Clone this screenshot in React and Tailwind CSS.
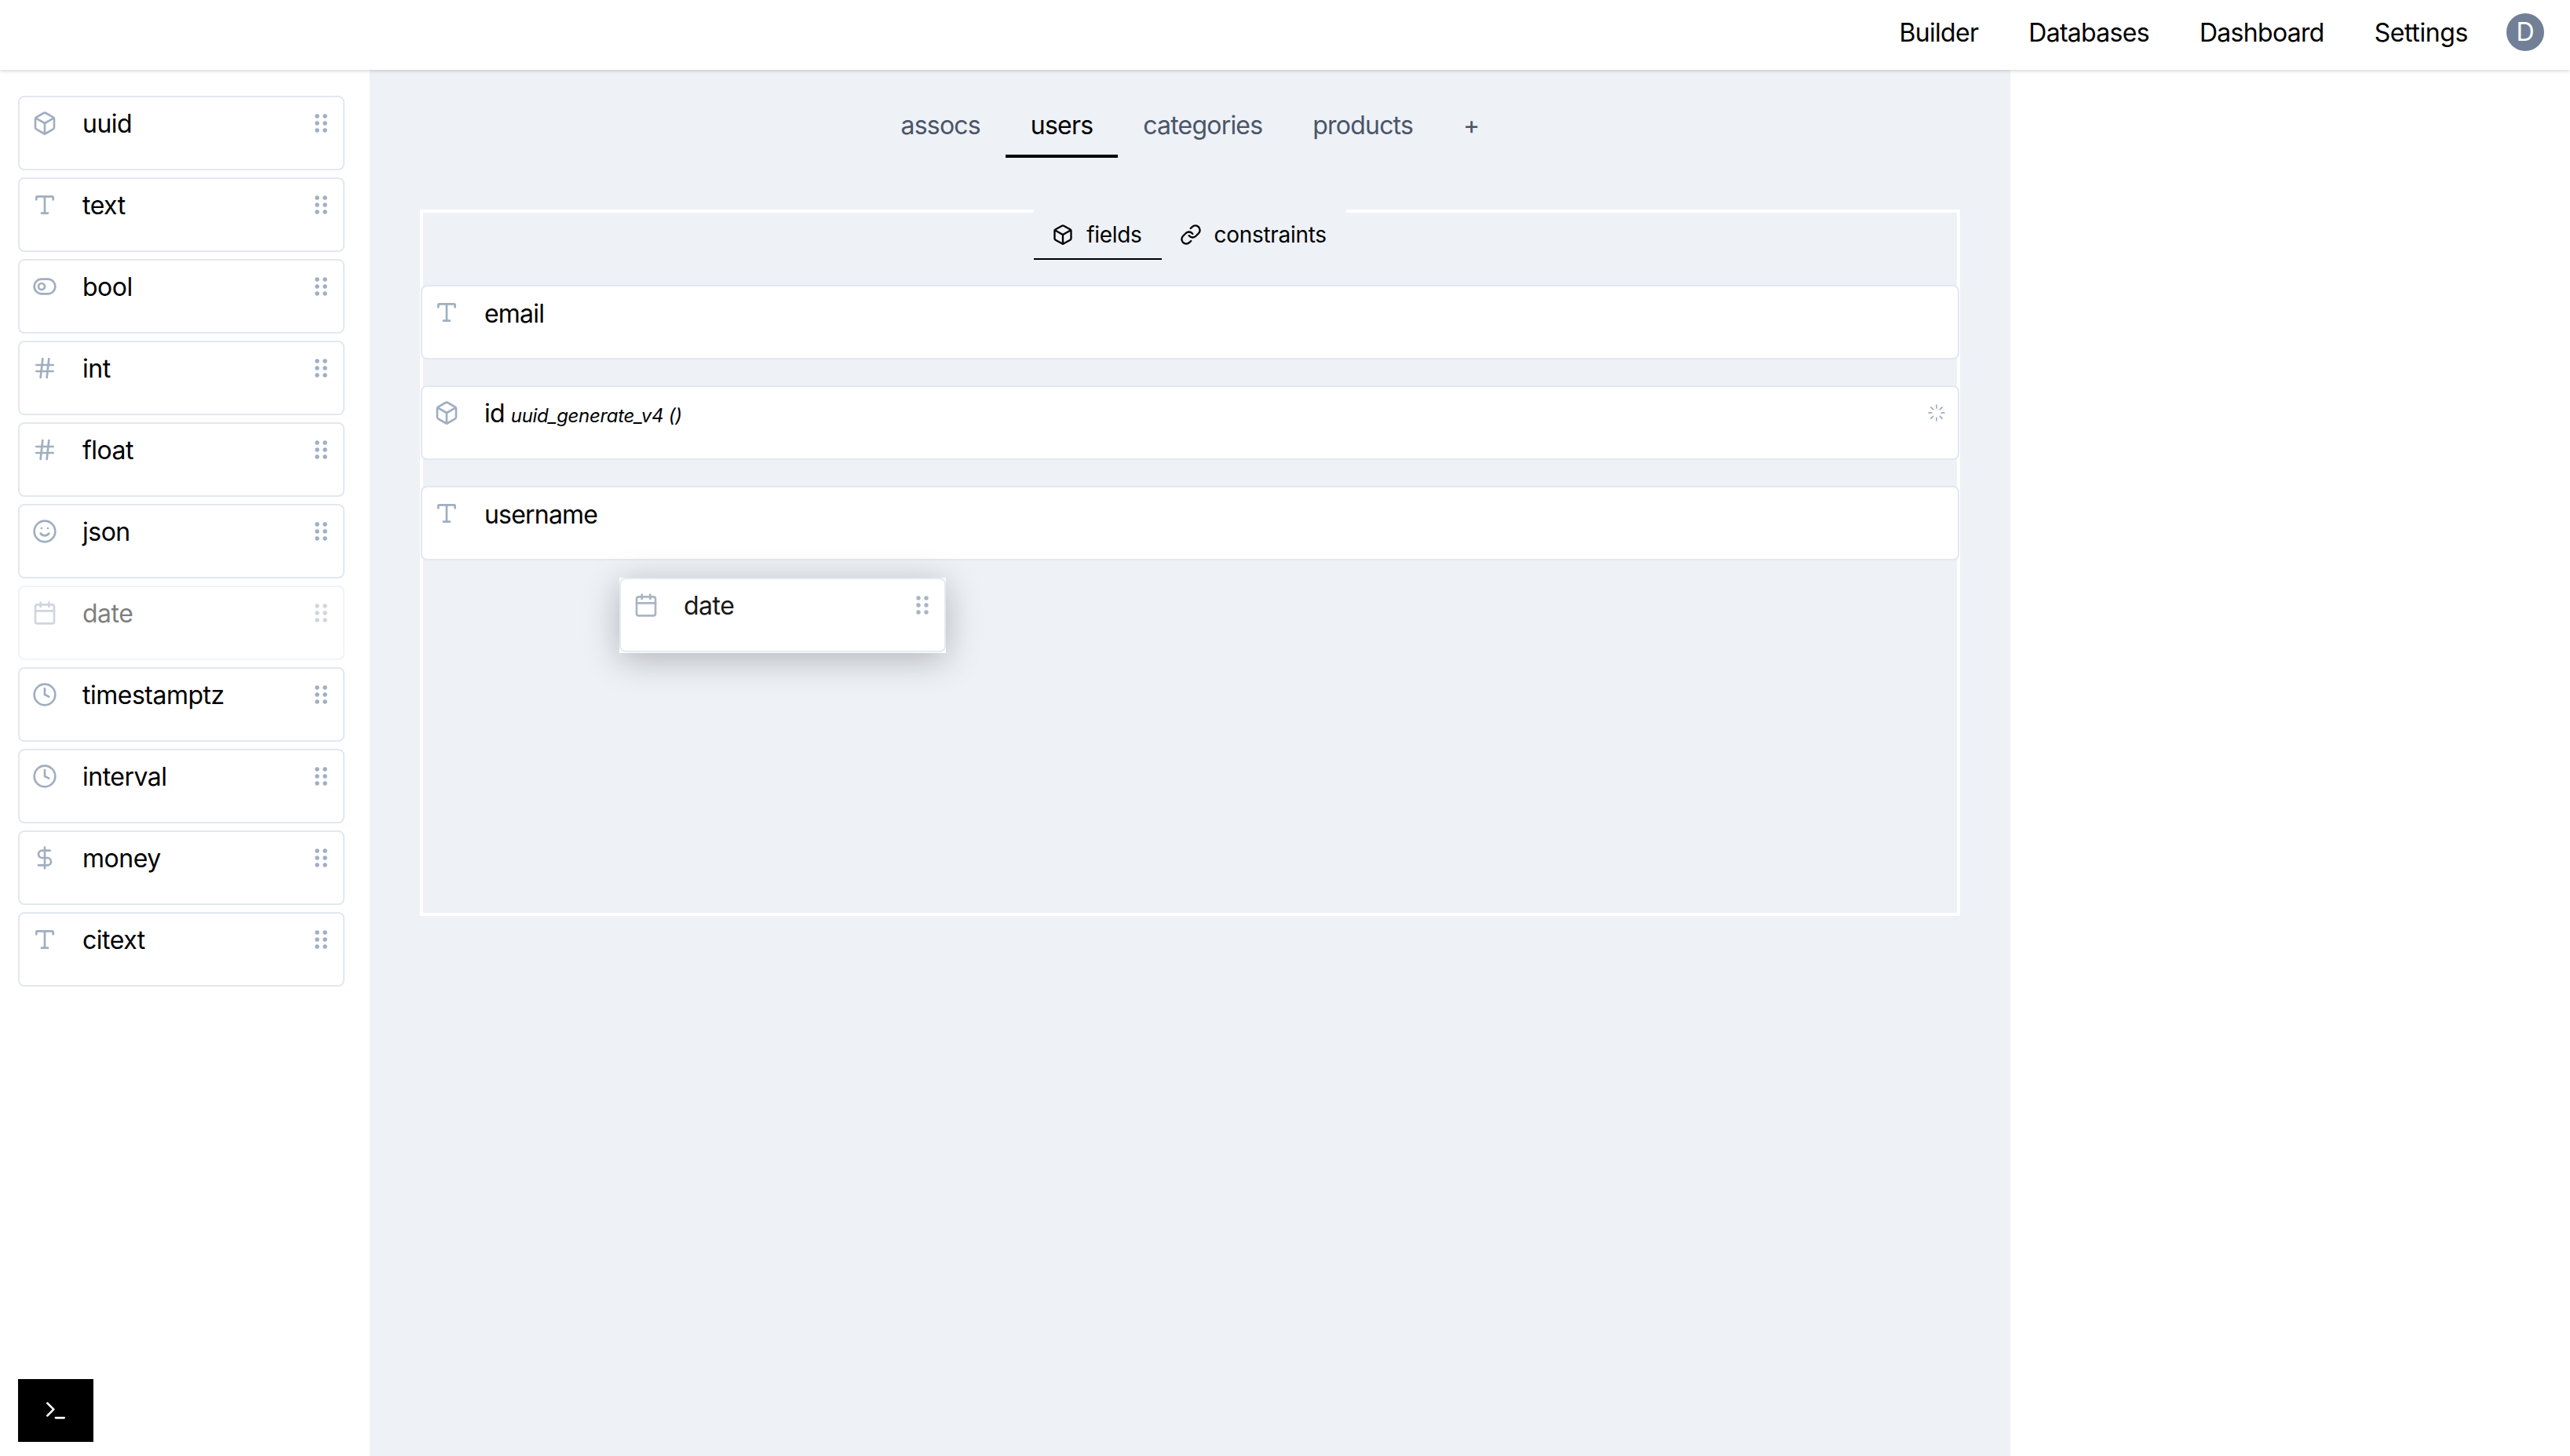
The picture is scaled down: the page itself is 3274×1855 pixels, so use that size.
import React from "react";
import { Box, Type, ToggleLeft, Hash, Smile, Calendar, Clock, DollarSign, Link, Loader, Terminal } from "lucide-react";

function Dots() {
  return (
    <svg width="16" height="24" viewBox="0 0 16 24" className="shrink-0 text-[#a0aec0]" fill="currentColor">
      <circle cx="3" cy="3" r="2.7" /><circle cx="13" cy="3" r="2.7" />
      <circle cx="3" cy="12" r="2.7" /><circle cx="13" cy="12" r="2.7" />
      <circle cx="3" cy="21" r="2.7" /><circle cx="13" cy="21" r="2.7" />
    </svg>
  );
}

function PaletteCard({ icon: Icon, label, className = "" }) {
  return (
    <div className={"h-[95px] w-[416px] rounded-lg border-2 border-[#e2e8f0] bg-white pl-4 pr-[20px] pt-[9px] " + className}>
      <div className="flex h-12 items-center">
        <Icon size={32} className="shrink-0 text-[#a0aec0]" />
        <span className="ml-8 flex-1 pt-0.5 text-[32px] leading-[48px] tracking-[-0.5px] text-black">{label}</span>
        <Dots />
      </div>
    </div>
  );
}

function FieldCard({ icon: Icon, label, extra, spinner }) {
  return (
    <div className="-mx-[3px] mb-[33px] h-[95px] rounded-lg border-2 border-[#e2e8f0] bg-white pl-[15px] pr-[17px] pt-[9px]">
      <div className="flex h-12 items-center">
        <Icon size={32} className="shrink-0 text-[#a0aec0]" />
        <div className="ml-8 flex-1 pt-1 text-[32px] leading-[48px] tracking-[-0.8px] text-black">
          {label}
          {extra && <span className="ml-2 text-[24px] italic tracking-[-0.3px]">{extra}</span>}
        </div>
        {spinner && <Loader size={24} strokeWidth={1.5} className="-mr-0.5 shrink-0 text-[#94a3b8]" />}
      </div>
    </div>
  );
}

const palette = [
  [Box, "uuid"], [Type, "text"], [ToggleLeft, "bool"], [Hash, "int"], [Hash, "float"], [Smile, "json"],
  [Calendar, "date"], [Clock, "timestamptz"], [Clock, "interval"], [DollarSign, "money"], [Type, "citext"],
];

export default function App() {
  return (
    <div className="flex h-[1855px] w-[3274px] flex-col overflow-hidden bg-white font-[Inter,sans-serif] text-black">
      <header className="relative z-10 flex h-[89px] shrink-0 items-center justify-end bg-white pr-[33px] shadow-[0_1px_5px_rgba(0,0,0,0.2)]">
        <nav className="flex items-center gap-16 pb-1.5 text-[32px] leading-[48px] tracking-[-0.7px]">
          <a>Builder</a>
          <a>Databases</a>
          <a>Dashboard</a>
          <a className="tracking-[-0.4px]">Settings</a>
        </nav>
        <div className="mb-2 ml-[49px] flex h-12 w-12 items-center justify-center rounded-full bg-[#718096] text-[32px] text-white">D</div>
      </header>

      <div className="flex min-h-0 flex-1">
        <aside className="flex w-[471px] shrink-0 flex-col justify-between bg-white pb-[18px] pl-[23px] pt-[33px]">
          <div className="flex flex-col gap-[9px]">
            {palette.map(([icon, label]) => (
              <PaletteCard key={label} icon={icon} label={label} className={label === "date" ? "opacity-50" : ""} />
            ))}
          </div>
          <button className="flex h-20 w-24 items-center justify-center bg-black text-white">
            <Terminal size={32} />
          </button>
        </aside>

        <main className="w-[2090px] shrink-0 bg-[#eef1f6] px-16 pt-[47px]">
          <div className="flex justify-center text-[32px] leading-[48px] tracking-[-0.8px] text-[#4a5568]">
            <div className="border-b-4 border-transparent px-8 pb-[13px]">assocs</div>
            <div className="border-b-4 border-black px-8 pb-[13px] text-black">users</div>
            <div className="border-b-4 border-transparent px-8 pb-[13px]">categories</div>
            <div className="border-b-4 border-transparent px-8 pb-[13px]">products</div>
            <div className="border-b-4 border-transparent px-8 pb-[13px]">+</div>
          </div>

          <section className="relative mt-[66px] h-[900px] border-4 border-white">
            <div className="-mt-1 mb-8 flex justify-center">
              <div className="flex bg-[#eef1f6] text-[28px] leading-[42px] tracking-[-0.3px] text-black">
                <div className="flex items-center gap-4 border-b-2 border-black pb-[9px] pl-[23px] pr-[25px] pt-[11px]">
                  <Box size={28} />
                  fields
                </div>
                <div className="flex items-center gap-4 pb-[11px] pl-[23px] pr-[25px] pt-[11px]">
                  <Link size={28} />
                  constraints
                </div>
              </div>
            </div>
            <FieldCard icon={Type} label="email" />
            <FieldCard icon={Box} label="id" extra="uuid_generate_v4 ()" spinner />
            <FieldCard icon={Type} label="username" />
            <div className="absolute left-[250px] top-[465px] bg-white pb-px shadow-[0_8px_44px_rgba(0,0,0,0.26)]">
              <PaletteCard icon={Calendar} label="date" className="opacity-90" />
            </div>
          </section>
        </main>
      </div>
    </div>
  );
}
